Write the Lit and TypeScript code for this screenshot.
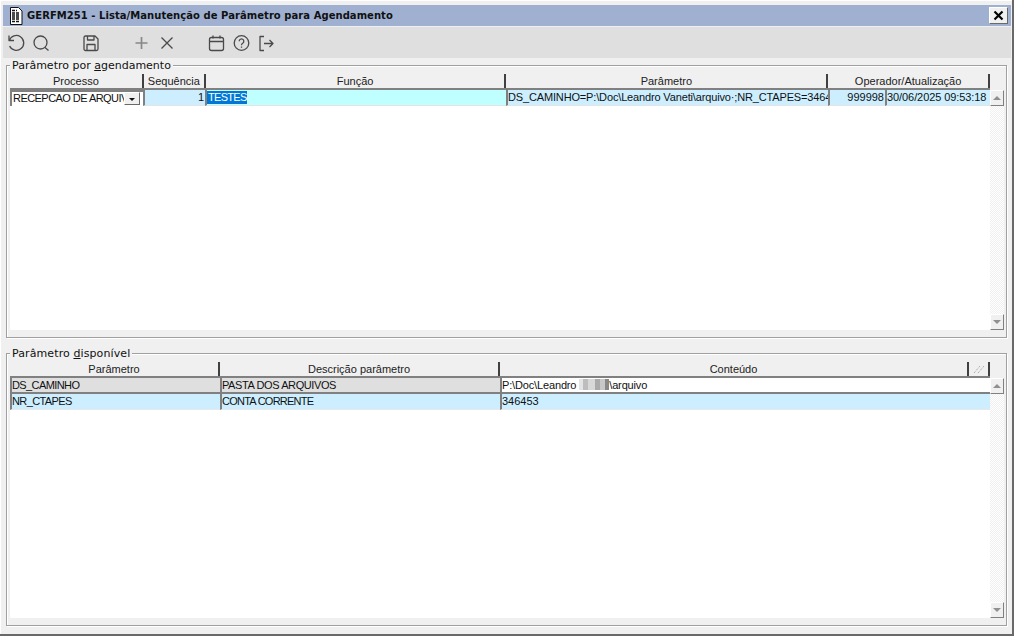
import { LitElement, html, css, svg } from "lit";
import { customElement } from "lit/decorators.js";

const ico = (c: unknown) => html`<div class="slot"><svg class="ico" width="20" height="20" viewBox="0 0 20 20" fill="none" stroke="#4a4a4a" stroke-width="1.3" stroke-linejoin="round">${c}</svg></div>`;
const gap = html`<div class="slot"></div>`;

@customElement("app-root")
export class AppRoot extends LitElement {
  static styles = css`
    :host { display: block; width: 1014px; height: 636px; overflow: hidden; font-family: "Liberation Sans", Arial, sans-serif; font-size: 11px; color: #111; }
    * { box-sizing: border-box; }
    .win { width: 1014px; height: 636px; background: #f0f0f0; padding: 5px 1px 2px 3px; border-right: 2px solid #696969; border-bottom: 2px solid #696969; box-shadow: inset 1px 1px 0 #fff; display: flex; flex-direction: column; }
    .title { height: 21px; flex: none; background: #9fb0d0; display: flex; align-items: center; padding: 0 3px 0 6px; font: bold 10px "DejaVu Sans", Verdana, sans-serif; letter-spacing: .05px; color: #111; }
    .title .t { margin-left: 4px; flex: 1; }
    .close { width: 19px; height: 17px; background: #f0f0f0; border: 1px solid; border-color: #fff #696969 #696969 #fff; display: flex; align-items: center; justify-content: center; }
    .bar { height: 31px; margin-top: 1px; padding-bottom: 2px; flex: none; background: #dfdfdf; display: flex; align-items: center; }
    .slot { width: 25px; flex: none; display: flex; justify-content: center; }
    .ico { display: block; flex: none; }
    .g { border: 1px solid #a0a0a0; box-shadow: 1px 1px 0 #fff, inset 1px 1px 0 #fff; position: relative; margin: 0 4px 0 3px; padding: 8px 1px 7px 3px; height: 273px; flex: none; display: flex; flex-direction: column; }
    .g1 { margin-top: 7px; }
    .g2 { margin-top: 15px; }
    .leg { position: absolute; left: 3px; top: -7px; background: #f0f0f0; padding: 0 2px; font: 11px/13px "DejaVu Sans", Verdana, sans-serif; color: #111; }
    .g2 .leg { letter-spacing: .1px; }
    .leg u { text-underline-offset: 1px; }
    .gr { display: flex; flex: 1; min-height: 0; }
    .data { flex: none; width: 980px; background: #fff; display: flex; flex-direction: column; }
    .hd { display: flex; height: 16px; flex: none; background: #f0f0f0; border-bottom: 2px solid #808080; }
    .hd div { text-align: center; line-height: 15px; color: #222; border-right: 2px solid #404040; overflow: hidden; white-space: nowrap; }
    .row { display: flex; height: 16px; flex: none; }
    .c { border-left: 2px solid #808080; line-height: 14px; padding: 0 1px 0 0; overflow: hidden; white-space: nowrap; background: #cceeff; border-bottom: 1px solid #e4e4e4; }
    .r { text-align: right; padding-right: 1px; }
    .fn { background: #bfffff; }
    .sel { background: #0078d7; color: #fff; display: inline-block; height: 13px; line-height: 13px; letter-spacing: -.7px; padding: 0 0 0 1px; }
    .cb { display: flex; background: #fff; border-width: 2px 0 0 2px; border-style: solid; border-color: #808080; padding-left: 1px; }
    .cb span { overflow: hidden; width: 111px; line-height: 12px; letter-spacing: -.55px; flex: none; }
    .dd { width: 16px; height: 13px; background: #f0f0f0; border: 1px solid; border-color: #fff #696969 #696969 #fff; position: relative; flex: none; }
    .dd::after { content: ""; position: absolute; left: 4px; top: 5px; border: 3px solid transparent; border-top: 3px solid #111; border-bottom: 0; }
    .sb { width: 14px; flex: none; display: flex; flex-direction: column; justify-content: space-between; background: repeating-conic-gradient(#f0f0f0 0 25%, #fff 0 50%) 0 0 / 2px 2px; margin-top: 16px; }
    .sbb { width: 14px; height: 16px; background: #f0f0f0; border: 1px solid; border-color: #fff #808080 #808080 #fff; position: relative; }
    .sbb::after { content: ""; position: absolute; left: 2px; top: 5px; border: 4px solid transparent; }
    .up::after { border-bottom: 4px solid #909090; border-top: 0; }
    .dn::after { border-top: 4px solid #909090; border-bottom: 0; }
    .cell2 { border-bottom: 2px solid #808080; background: #dfdfdf; }
    .cr { background: #cceeff; border-bottom: 1px solid #e8e8e8; }
    .k1 { letter-spacing: -.6px; }
    .k2 { letter-spacing: -.4px; }
    .k3 { letter-spacing: -.75px; }
    .k4 { letter-spacing: -.15px; }
    .k5 { letter-spacing: -.08px; }
    .white { background: #fff; }
    .blur { display: inline-block; width: 30px; height: 11px; vertical-align: -1px; background: linear-gradient(90deg, #e4e4e4 0 15%, #bdbdbd 15% 30%, #d8d8d8 30% 55%, #aaa 55% 70%, #c8c8c8 70% 88%, #888 88%); }
    .fix { display: flex; align-items: center; justify-content: center; }
  `;

  render() {
    const h1 = [134, 62, 301, 322, 162];
    const h2 = [210, 280, 469, 21];
    const sb = html`<div class="sb"><div class="sbb up"></div><div class="sbb dn"></div></div>`;
    return html`<div class="win">
      <div class="title">
        <svg width="14" height="18" viewBox="0 0 14 18" fill="none"><path d="M1.500 .5h8l3.500 3.500v13.500h-11.500z" fill="#fff" stroke="#111"/><path d="M3 3.500h5M3 6h8M3 8h8M3 10h8M3 12h8M3 14.500h8" stroke="#111" stroke-width="1.300" stroke-dasharray="3 1"/></svg>
        <span class="t">GERFM251 - Lista/Manutenção de Parâmetro para Agendamento</span>
        <div class="close"><svg width="11" height="11" viewBox="0 0 11 11"><path d="M1.500 1.500l8 8M9.500 1.500l-8 8" stroke="#000" stroke-width="2.200"/></svg></div>
      </div>
      <div class="bar">
        ${ico(svg`<path d="M3 3.500v5h5"/><path d="M3.300 8.500A7.400 7.400 0 1 1 3.600 14"/>`)}
        ${ico(svg`<circle cx="9.500" cy="10.500" r="6.500"/><path d="M14 15.500l3.500 3"/>`)}
        ${gap}
        ${ico(svg`<path d="M3 5.500a1.500 1.500 0 0 1 1.500-1.500h9.500l3 3v10a1.500 1.500 0 0 1-1.500 1.500h-11a1.500 1.500 0 0 1-1.500-1.500z M6 18.500v-6h8v6 M6.500 4v4h6.500v-4"/>`)}
        ${gap}
        ${ico(svg`<path d="M10.500 5v12M4.500 11h12" stroke="#888" stroke-width="1.700"/>`)}
        ${ico(svg`<path d="M5.500 5.500l11 11M16.500 5.500l-11 11"/>`)}
        ${gap}
        ${ico(svg`<rect x="3.500" y="5.500" width="14" height="13" rx="2"/><path d="M3.500 9.500h14M7 3.500v3M14 3.500v3"/>`)}
        ${ico(svg`<circle cx="10.500" cy="11" r="7.300"/><path d="M8.200 9.200a2.300 2.300 0 1 1 3.500 2c-.9.500-1.200 1-1.200 2M10.500 14.500v1.200"/>`)}
        ${ico(svg`<path d="M8 4.500h-4v14h4M8 11.500h9M13.500 8l3.500 3.500-3.500 3.500"/>`)}
      </div>
      <div class="g g1">
        <div class="leg">Parâmetro por <u>a</u>gendamento</div>
        <div class="gr">
          <div class="data">
            <div class="hd">${["Processo", "Sequência", "Função", "Parâmetro", "Operador/Atualização"].map((t, i) => html`<div style="width:${h1[i]}px">${t}</div>`)}</div>
            <div class="row">
              <div class="c cb" style="width:133px"><span>RECEPCAO DE ARQUIVOS</span><div class="dd"></div></div>
              <div class="c r" style="width:62px">1</div>
              <div class="c fn" style="width:301px"><span class="sel">TESTES</span></div>
              <div class="c k4" style="width:322px">DS_CAMINHO=P:\\Doc\\Leandro Vaneti\\arquivo·;NR_CTAPES=346453</div>
              <div class="c r" style="width:57px">999998</div>
              <div class="c k5" style="width:105px">30/06/2025 09:53:18</div>
            </div>
          </div>
          ${sb}
        </div>
      </div>
      <div class="g g2">
        <div class="leg">Parâmetro <u>d</u>isponível</div>
        <div class="gr">
          <div class="data">
            <div class="hd">
              ${["Parâmetro", "Descrição parâmetro", "Conteúdo"].map((t, i) => html`<div style="width:${h2[i]}px">${t}</div>`)}
              <div class="fix" style="width:21px"><svg width="12" height="10" viewBox="0 0 12 10" stroke="#999" stroke-dasharray="1 1"><path d="M1 9l6-7M5 9l6-7"/></svg></div>
            </div>
            <div class="row">
              <div class="c cell2 k1" style="width:210px">DS_CAMINHO</div>
              <div class="c cell2 k2" style="width:280px">PASTA DOS ARQUIVOS</div>
              <div class="c cell2 white k4" style="width:490px">P:\\Doc\\Leandro <span class="blur"></span>\\arquivo</div>
            </div>
            <div class="row">
              <div class="c cr k1" style="width:210px">NR_CTAPES</div>
              <div class="c cr k3" style="width:280px">CONTA CORRENTE</div>
              <div class="c cr" style="width:490px">346453</div>
            </div>
          </div>
          ${sb}
        </div>
      </div>
    </div>`;
  }
}
